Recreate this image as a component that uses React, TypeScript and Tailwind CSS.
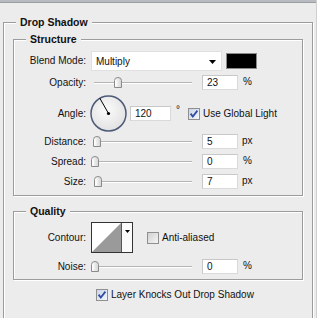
import React from "react";

const Thumb = ({ left }: { left: number }) => (
  <svg
    width="8"
    height="11"
    viewBox="0 0 8 11"
    className="absolute top-[2px]"
    style={{ left }}
  >
    <defs>
      <linearGradient id="tg" x1="0" y1="0" x2="1" y2="0">
        <stop offset="0" stopColor="#ffffff" />
        <stop offset="1" stopColor="#d4d4d4" />
      </linearGradient>
    </defs>
    <path
      d="M0.5 3.5 Q0.5 0.5 4 0.5 Q7.5 0.5 7.5 3.5 V10.5 H0.5 Z"
      fill="url(#tg)"
      stroke="#8a8a8a"
    />
    <path d="M2 4 V9" stroke="#ffffff" />
  </svg>
);

const Slider = ({ pct }: { pct: number }) => (
  <div className="relative w-[106px] h-[15px]">
    <div className="absolute left-[3px] top-[7px] w-[98px] h-[1px] bg-[#b4b4b4]" />
    <div className="absolute left-[3px] top-[8px] w-[98px] h-[1px] bg-[#ffffff]" />
    <Thumb left={Math.round(pct * 98)} />
  </div>
);

const NumBox = ({ v, w = "w-[36px]" }: { v: string; w?: string }) => (
  <div
    className={`${w} h-[15px] bg-white border border-[#dadada] border-t-[#c8c8c8] border-l-[#c8c8c8] pl-[4px] flex items-center text-[10px] leading-none`}
  >
    {v}
  </div>
);

const Label = ({ children }: { children: React.ReactNode }) => (
  <div className="w-[72px] text-right pr-[0px] text-[10px] leading-none">
    {children}
  </div>
);

const CheckBox = ({ checked }: { checked: boolean }) => (
  <svg width="12" height="12" viewBox="0 0 12 12" className="shrink-0">
    <defs>
      <linearGradient id={checked ? "cbg1" : "cbg0"} x1="0" y1="0" x2="1" y2="1">
        <stop offset="0" stopColor={checked ? "#c9d3e6" : "#cfcfcf"} />
        <stop offset="1" stopColor={checked ? "#f6f8fc" : "#f7f7f7"} />
      </linearGradient>
    </defs>
    <rect
      x="0.5"
      y="0.5"
      width="11"
      height="11"
      fill={`url(#${checked ? "cbg1" : "cbg0"})`}
      stroke="#8f8f8f"
    />
    {checked && (
      <path
        d="M2.6 5.6 L4.8 8.6 L9.4 2.6"
        fill="none"
        stroke="#2d4fa3"
        strokeWidth="1.8"
      />
    )}
  </svg>
);

const groupCls =
  "relative border border-[#9c9c9c] shadow-[inset_1px_1px_0_#ffffff,1px_1px_0_#ffffff]";
const titleCls =
  "absolute -top-[7px] px-[4px] bg-[#ececec] text-[10.5px] font-bold leading-[13px]";

export default function App() {
  return (
    <div className="w-[317px] h-[318px] bg-[#ececec] overflow-hidden relative font-['Liberation_Sans',Arial,sans-serif] text-[#111111] border-r border-[#cfcfcf]">
      <div className="h-[3px] bg-[#b8bbbf] border-b border-[#9a9da2]" />
      <div className={`${groupCls} mt-[19px] ml-[3px] w-[310px] h-[320px]`}>
        <div className={`${titleCls} left-[12px]`}>Drop Shadow</div>

        {/* Structure */}
        <div className={`${groupCls} mt-[16px] ml-[9px] w-[290px] pt-[11px] pb-[6px]`}>
          <div className={`${titleCls} left-[12px]`}>Structure</div>

          {/* Blend mode */}
          <div className="flex items-center h-[20px]">
            <Label>Blend Mode:</Label>
            <div className="ml-[5px] w-[131px] h-[20px] bg-white border border-[#e0e0e0] flex items-center pl-[4px] relative text-[10px]">
              Multiply
              <svg
                width="7"
                height="4"
                viewBox="0 0 7 4"
                className="absolute right-[5px] top-[8px]"
              >
                <path d="M0 0 H7 L3.5 4 Z" fill="#000" />
              </svg>
            </div>
            <div className="ml-[4px] w-[31px] h-[16px] bg-black border border-[#8a8a8a]" />
          </div>

          {/* Opacity */}
          <div className="flex items-center h-[15px] mt-[4px]">
            <Label>Opacity:</Label>
            <div className="ml-[5px]">
              <Slider pct={0.23} />
            </div>
            <div className="ml-[5px]">
              <NumBox v="23" />
            </div>
            <div className="ml-[5px] text-[10px] -mt-[3px]">%</div>
          </div>

          {/* Angle */}
          <div className="flex items-center h-[37px] mt-[5px]">
            <Label>Angle:</Label>
            <svg width="37" height="37" viewBox="0 0 37 37" className="ml-[4px]">
              <defs>
                <radialGradient id="dial" cx="0.45" cy="0.4" r="0.6">
                  <stop offset="0" stopColor="#fbfbfb" />
                  <stop offset="1" stopColor="#e2e2e2" />
                </radialGradient>
              </defs>
              <circle
                cx="18.5"
                cy="18.5"
                r="17.5"
                fill="url(#dial)"
                stroke="#4d5a78"
                strokeWidth="1.5"
              />
              <path d="M18.5 18.5 L9.8 3.2" stroke="#000" strokeWidth="1" />
              <circle cx="18.5" cy="18.5" r="1.6" fill="#000" />
            </svg>
            <div className="ml-[3px]">
              <NumBox v="120" w="w-[41px]" />
            </div>
            <div className="ml-[5px] text-[10px] -mt-[8px]">°</div>
            <div className="ml-[8px]">
              <CheckBox checked />
            </div>
            <div className="ml-[3px] text-[10px]">Use Global Light</div>
          </div>

          {/* Distance */}
          <div className="flex items-center h-[15px] mt-[2px]">
            <Label>Distance:</Label>
            <div className="ml-[5px]">
              <Slider pct={0.02} />
            </div>
            <div className="ml-[5px]">
              <NumBox v="5" />
            </div>
            <div className="ml-[4px] text-[10px] -mt-[3px]">px</div>
          </div>

          {/* Spread */}
          <div className="flex items-center h-[15px] mt-[5px]">
            <Label>Spread:</Label>
            <div className="ml-[5px]">
              <Slider pct={0} />
            </div>
            <div className="ml-[5px]">
              <NumBox v="0" />
            </div>
            <div className="ml-[5px] text-[10px] -mt-[3px]">%</div>
          </div>

          {/* Size */}
          <div className="flex items-center h-[15px] mt-[5px]">
            <Label>Size:</Label>
            <div className="ml-[5px]">
              <Slider pct={0.03} />
            </div>
            <div className="ml-[5px]">
              <NumBox v="7" />
            </div>
            <div className="ml-[4px] text-[10px] -mt-[3px]">px</div>
          </div>
        </div>

        {/* Quality */}
        <div className={`${groupCls} mt-[15px] ml-[9px] w-[290px] pt-[10px] pb-[5px]`}>
          <div className={`${titleCls} left-[12px]`}>Quality</div>

          <div className="flex items-center h-[31px]">
            <Label>Contour:</Label>
            <div className="ml-[5px] w-[42px] h-[31px] border border-[#333333] flex bg-white">
              <svg width="29" height="29" viewBox="0 0 29 29">
                <path d="M0 29 L29 0 V29 Z" fill="#9a9a9a" />
              </svg>
              <div className="w-[11px] h-[29px] border-l border-[#555555] relative bg-[#fafafa]">
                <svg
                  width="5"
                  height="3"
                  viewBox="0 0 5 3"
                  className="absolute left-[3px] top-[7px]"
                >
                  <path d="M0 0 H5 L2.5 3 Z" fill="#000" />
                </svg>
              </div>
            </div>
            <div className="ml-[14px]">
              <CheckBox checked={false} />
            </div>
            <div className="ml-[3px] text-[10px]">Anti-aliased</div>
          </div>

          <div className="flex items-center h-[15px] mt-[6px]">
            <Label>Noise:</Label>
            <div className="ml-[5px]">
              <Slider pct={0} />
            </div>
            <div className="ml-[5px]">
              <NumBox v="0" />
            </div>
            <div className="ml-[5px] text-[10px] -mt-[3px]">%</div>
          </div>
        </div>

        <div className="flex items-center mt-[7px] ml-[92px]">
          <CheckBox checked />
          <div className="ml-[3px] text-[10px]">Layer Knocks Out Drop Shadow</div>
        </div>
      </div>
    </div>
  );
}
